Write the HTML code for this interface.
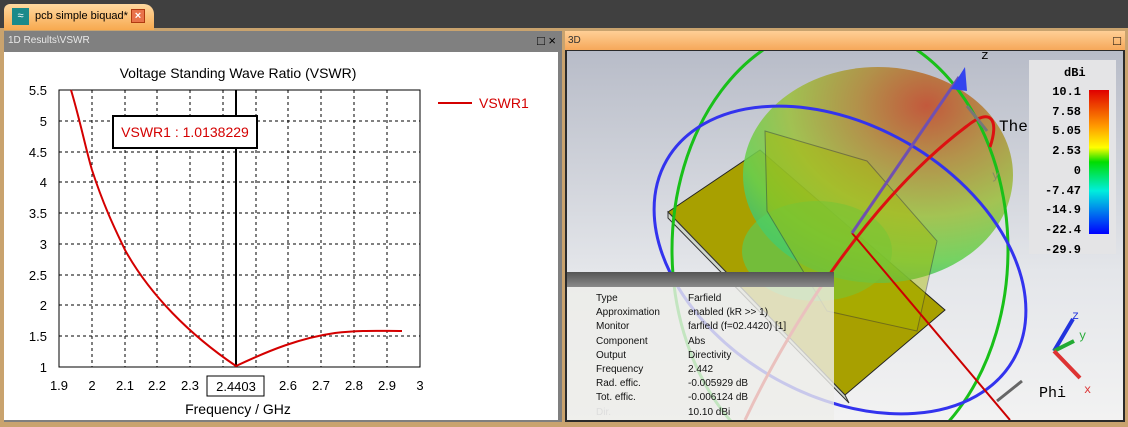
<!DOCTYPE html>
<html><head><meta charset="utf-8"><style>
*{margin:0;padding:0;box-sizing:border-box}
html,body{width:1128px;height:427px;overflow:hidden}
body{background:#3a3a3a;position:relative;font-family:"Liberation Sans",sans-serif}
.tabbar{position:absolute;left:0;top:0;width:1128px;height:30px;background:#404040}
.tab{position:absolute;left:4px;top:4px;width:150px;height:26px;background:linear-gradient(#ffd9a0,#f7a94f);border-radius:6px 10px 0 0;font-size:11px;color:#000}
.frame{position:absolute;left:0;top:28px;width:1128px;height:399px;background:#c9a36e}
.lp{position:absolute;left:4px;top:31px;width:558px;height:391px;background:#7f7f7f}
.lh{position:absolute;left:0;top:0;width:558px;height:21px;background:#808080;color:#e8e8e8;font-size:10px;line-height:20px;padding-left:4px}
.plot{position:absolute;left:4px;top:52px;width:554px;height:368px;background:#fff}
.rp{position:absolute;left:565px;top:31px;width:560px;height:391px;background:#2a2a2a}
.rh{position:absolute;left:0;top:0;width:560px;height:19px;background:linear-gradient(#ffcf96,#f6a85a);font-size:10px;line-height:19px;padding-left:3px;color:#333}
.view{position:absolute;left:2px;top:20px;width:556px;height:369px;background:linear-gradient(#b8bcc8,#e4e6ea 60%,#f2f2f2)}
</style></head><body>
<div class="tabbar"></div>
<div class="frame"></div>
<div class="tab">
 <div style="position:absolute;left:8px;top:4px;width:17px;height:17px;background:#1b8a8a;color:#fff;font-size:11px;text-align:center;line-height:17px">≈</div>
 <span style="position:absolute;left:31px;top:6px">pcb simple biquad*</span>
 <div style="position:absolute;left:127px;top:5px;width:14px;height:14px;background:#e8734a;border:1px solid #b03a10;color:#fff;font-size:11px;text-align:center;line-height:12px;font-weight:bold">×</div>
</div>
<div class="lp"><div class="lh">1D Results\VSWR<span style="position:absolute;right:6px;top:0;color:#000;font-size:13px">□ ×</span></div></div>
<div class="plot"></div>
<svg style="position:absolute;left:0;top:0" width="562" height="427" font-family="Liberation Sans,sans-serif">
<text x="238" y="78" font-size="14" text-anchor="middle">Voltage Standing Wave Ratio (VSWR)</text>
<g stroke="#000" stroke-dasharray="3,3" stroke-width="1">
<line x1="92" y1="90" x2="92" y2="367"/><line x1="125" y1="90" x2="125" y2="367"/><line x1="157" y1="90" x2="157" y2="367"/><line x1="190" y1="90" x2="190" y2="367"/><line x1="223" y1="90" x2="223" y2="367"/><line x1="256" y1="90" x2="256" y2="367"/><line x1="288" y1="90" x2="288" y2="367"/><line x1="321" y1="90" x2="321" y2="367"/><line x1="354" y1="90" x2="354" y2="367"/><line x1="387" y1="90" x2="387" y2="367"/>
<line x1="59" y1="121" x2="420" y2="121"/><line x1="59" y1="152" x2="420" y2="152"/><line x1="59" y1="182" x2="420" y2="182"/><line x1="59" y1="213" x2="420" y2="213"/><line x1="59" y1="244" x2="420" y2="244"/><line x1="59" y1="275" x2="420" y2="275"/><line x1="59" y1="305" x2="420" y2="305"/><line x1="59" y1="336" x2="420" y2="336"/>
</g>
<rect x="59" y="90" width="361" height="277" fill="none" stroke="#000"/>
<line x1="236" y1="90" x2="236" y2="367" stroke="#000" stroke-width="2"/>
<path d="M71 90 C80 120 86 150 92 170 C105 210 118 235 125 250 C150 295 190 335 236 366 C270 350 300 338 335 333 C360 330 380 331 402 331" fill="none" stroke="#d40000" stroke-width="2"/>
<g font-size="13" text-anchor="end"><text x="47" y="95">5.5</text><text x="47" y="126">5</text><text x="47" y="157">4.5</text><text x="47" y="187">4</text><text x="47" y="218">3.5</text><text x="47" y="249">3</text><text x="47" y="280">2.5</text><text x="47" y="310">2</text><text x="47" y="341">1.5</text><text x="47" y="372">1</text></g>
<g font-size="13" text-anchor="middle"><text x="59" y="390">1.9</text><text x="92" y="390">2</text><text x="125" y="390">2.1</text><text x="157" y="390">2.2</text><text x="190" y="390">2.3</text><text x="288" y="390">2.6</text><text x="321" y="390">2.7</text><text x="354" y="390">2.8</text><text x="387" y="390">2.9</text><text x="420" y="390">3</text></g>
<rect x="207" y="376" width="57" height="20" fill="#fff" stroke="#000"/><text x="236" y="391" font-size="13" text-anchor="middle">2.4403</text>
<text x="238" y="414" font-size="14" text-anchor="middle">Frequency / GHz</text>
<rect x="113" y="116" width="144" height="32" fill="#fff" stroke="#000" stroke-width="2"/><text x="185" y="137" font-size="14" fill="#d40000" text-anchor="middle">VSWR1 : 1.0138229</text>
<line x1="438" y1="103" x2="472" y2="103" stroke="#d40000" stroke-width="2"/><text x="479" y="108" font-size="14" fill="#d40000">VSWR1</text>
</svg>
<div class="rp"><div class="rh">3D<span style="position:absolute;right:4px;top:0;color:#000;font-size:13px">□</span></div><div class="view"></div></div>
<svg style="position:absolute;left:567px;top:51px" width="556" height="369" font-family="Liberation Mono,monospace">
<defs><radialGradient id="g" cx="0.68" cy="0.18" r="0.85"><stop offset="0" stop-color="#c24a28"/><stop offset="0.3" stop-color="#b08a38"/><stop offset="0.6" stop-color="#9cc040"/><stop offset="0.85" stop-color="#66d050"/><stop offset="1" stop-color="#40c070"/></radialGradient>
<linearGradient id="cb" x1="0" y1="0" x2="0" y2="1"><stop offset="0" stop-color="#e00000"/><stop offset="0.25" stop-color="#ff9900"/><stop offset="0.4" stop-color="#ffff00"/><stop offset="0.5" stop-color="#00dd00"/><stop offset="0.7" stop-color="#00eedd"/><stop offset="1" stop-color="#0000ff"/></linearGradient></defs>
<polygon points="101,161 193,99 378,259 278,344" fill="#a8a000" stroke="#222"/>
<polygon points="101,161 278,344 282,352 101,167" fill="#cfd6cc" stroke="#333"/>
<ellipse cx="311" cy="124" rx="135" ry="108" fill="url(#g)" opacity="0.88"/>
<ellipse cx="250" cy="200" rx="75" ry="50" fill="#50d060" opacity="0.6"/>
<polygon points="198,80 300,110 370,190 350,280 260,260 200,160" fill="#a8b800" opacity="0.45" stroke="#333"/>
<ellipse cx="273" cy="199" rx="168" ry="225" fill="none" stroke="#19c019" stroke-width="3"/>
<ellipse cx="273" cy="209" rx="200" ry="135" fill="none" stroke="#3333ee" stroke-width="3" transform="rotate(30 273 209)"/>
<path d="M178 369 C220 280 300 150 400 75 C425 55 432 70 423 96" fill="none" stroke="#dd1111" stroke-width="3"/>
<line x1="285" y1="182" x2="443" y2="369" stroke="#cc0000" stroke-width="2"/>
<line x1="285" y1="182" x2="392" y2="26" stroke="#7050b0" stroke-width="3"/>
<polygon points="398,16 384,38 400,40" fill="#3344ee"/>
<line x1="400" y1="55" x2="420" y2="80" stroke="#777" stroke-width="3"/>
<text x="414" y="8" font-size="13">z</text>
<text x="432" y="80" font-size="16">The<tspan fill="#aaa">ta</tspan></text>
<text x="425" y="128" font-size="12" fill="#886">y</text>
<text x="472" y="346" font-size="15">Phi</text>
<line x1="430" y1="350" x2="455" y2="330" stroke="#666" stroke-width="3"/>
<rect x="462" y="9" width="87" height="194" fill="#e4e4e6"/>
<text x="497" y="25" font-size="12" font-weight="bold">dBi</text>
<rect x="522" y="39" width="20" height="144" fill="url(#cb)"/>
<g font-size="12" font-weight="bold" text-anchor="end"><text x="514" y="44">10.1</text><text x="514" y="64">7.58</text><text x="514" y="83">5.05</text><text x="514" y="103">2.53</text><text x="514" y="123">0</text><text x="514" y="143">-7.47</text><text x="514" y="162">-14.9</text><text x="514" y="182">-22.4</text><text x="514" y="202">-29.9</text></g>
<line x1="487" y1="300" x2="506" y2="268" stroke="#2233dd" stroke-width="4"/><line x1="487" y1="300" x2="507" y2="290" stroke="#22aa33" stroke-width="4"/><line x1="487" y1="300" x2="513" y2="327" stroke="#dd3333" stroke-width="4"/>
<text x="505" y="268" font-size="12" fill="#2233dd">z</text><text x="512" y="288" font-size="12" fill="#22aa33">y</text><text x="517" y="342" font-size="12" fill="#dd3333">x</text>
</svg>
<div style="position:absolute;left:567px;top:272px;width:267px;height:148px;background:rgba(238,238,234,0.8);overflow:hidden">
<div style="height:15px;background:linear-gradient(#555,#8a8a8a)"></div>
<div style="position:absolute;left:29px;top:20px;font-size:10px;line-height:14.2px;color:#111">Type<br>Approximation<br>Monitor<br>Component<br>Output<br>Frequency<br>Rad. effic.<br>Tot. effic.<br><span style="color:#ddd">Dir.</span></div>
<div style="position:absolute;left:121px;top:20px;font-size:10px;line-height:14.2px;color:#111">Farfield<br>enabled (kR &gt;&gt; 1)<br>farfield (f=02.4420) [1]<br>Abs<br>Directivity<br>2.442<br>-0.005929 dB<br>-0.006124 dB<br>10.10 dBi</div>
</div>
</body></html>
